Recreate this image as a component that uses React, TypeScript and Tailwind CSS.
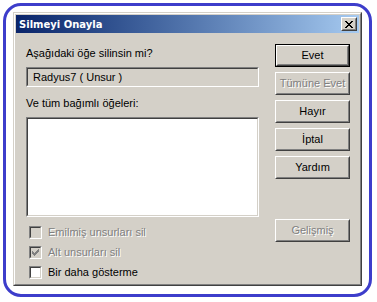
const face = "font-['Liberation_Sans',Arial,sans-serif]";

type BtnProps = {
  label: string;
  isDefault?: boolean;
  disabled?: boolean;
};

function ClassicButton({ label, isDefault, disabled }: BtnProps) {
  const body = (
    <div className="h-full w-full border border-t-white border-l-white border-r-[#404040] border-b-[#404040]">
      <div className="flex h-full w-full items-center justify-center border border-t-[#d4d0c8] border-l-[#d4d0c8] border-r-[#808080] border-b-[#808080]">
        <span
          className={
            disabled
              ? 'text-[11px] leading-[13px] text-[#808080] [text-shadow:1px_1px_0_#ffffff]'
              : 'text-[11px] leading-[13px] text-black'
          }
        >
          {label}
        </span>
      </div>
    </div>
  );

  if (isDefault) {
    return <div className="h-[23px] w-[75px] border border-black">{body}</div>;
  }
  return <div className="h-[23px] w-[75px]">{body}</div>;
}

type CheckProps = {
  label: string;
  checked?: boolean;
  disabled?: boolean;
};

function ClassicCheck({ label, checked, disabled }: CheckProps) {
  return (
    <div className="flex h-[13px] items-center">
      <div className="ml-[3px] h-[13px] w-[13px] border border-t-[#808080] border-l-[#808080] border-r-white border-b-white">
        <div
          className={
            disabled
              ? 'flex h-full w-full items-center justify-center border border-t-[#404040] border-l-[#404040] border-r-[#d4d0c8] border-b-[#d4d0c8] bg-[#d4d0c8]'
              : 'flex h-full w-full items-center justify-center border border-t-[#404040] border-l-[#404040] border-r-[#d4d0c8] border-b-[#d4d0c8] bg-white'
          }
        >
          {checked && (
            <svg width="7" height="7" viewBox="0 0 7 7" shapeRendering="crispEdges">
              <path
                d="M0 2h1v3h-1zM1 3h1v3h-1zM2 4h1v3h-1zM3 3h1v3h-1zM4 2h1v3h-1zM5 1h1v3h-1zM6 0h1v3h-1z"
                fill={disabled ? '#808080' : '#000000'}
              />
            </svg>
          )}
        </div>
      </div>
      <span
        className={
          disabled
            ? 'ml-[6px] text-[11px] leading-[13px] text-[#808080] [text-shadow:1px_1px_0_#ffffff]'
            : 'ml-[6px] text-[11px] leading-[13px] text-black'
        }
      >
        {label}
      </span>
    </div>
  );
}

export default function App() {
  return (
    <div className={`h-[302px] w-[377px] bg-white p-[3px] ${face}`}>
      <div className="h-[294px] w-[369px] rounded-[18px] border-[3px] border-[#3d3dcb] pl-[7px] pt-[6px]">
        {/* dialog window */}
        <div className="h-[274px] w-[349px] border border-t-[#d4d0c8] border-l-[#d4d0c8] border-r-[#404040] border-b-[#404040] bg-[#d4d0c8]">
          <div className="flex h-full w-full flex-col border border-t-white border-l-white border-r-[#808080] border-b-[#808080] p-[1px]">
            {/* title bar */}
            <div className="flex h-[18px] items-center justify-between bg-gradient-to-r from-[#0a246a] to-[#a6caf0] pl-[3px] pr-[2px]">
              <span className="font-['DejaVu_Sans',sans-serif] text-[10px] font-bold leading-[13px] text-white">
                Silmeyi Onayla
              </span>
              <div className="h-[14px] w-[16px] border border-t-white border-l-white border-r-[#404040] border-b-[#404040] bg-[#d4d0c8]">
                <div className="flex h-full w-full items-center justify-center border border-t-[#d4d0c8] border-l-[#d4d0c8] border-r-[#808080] border-b-[#808080]">
                  <svg width="8" height="7" viewBox="0 0 8 7" shapeRendering="crispEdges">
                    <path
                      d="M0 0h2v1h-2zM6 0h2v1h-2zM1 1h2v1h-2zM5 1h2v1h-2zM2 2h4v1h-4zM3 3h2v1h-2zM2 4h4v1h-4zM1 5h2v1h-2zM5 5h2v1h-2zM0 6h2v1h-2zM6 6h2v1h-2z"
                      fill="#000000"
                    />
                  </svg>
                </div>
              </div>
            </div>

            {/* body */}
            <div className="flex flex-1 pl-[10px]">
              <div className="flex w-[233px] flex-col pt-[13px]">
                <div className="h-[14px] text-[11px] leading-[14px] text-black">Aşağıdaki öğe silinsin mi?</div>
                <div className="mt-[7px] h-[20px] border border-t-[#808080] border-l-[#808080] border-r-white border-b-white">
                  <div className="flex h-full items-center border border-t-[#404040] border-l-[#404040] border-r-[#d4d0c8] border-b-[#d4d0c8] pl-[5px] text-[11px] leading-[13px] text-black">
                    Radyus7 ( Unsur )
                  </div>
                </div>
                <div className="mt-[9px] h-[14px] text-[11px] leading-[14px] text-black">Ve tüm bağımlı öğeleri:</div>
                <div className="mt-[7px] h-[100px] border border-t-[#808080] border-l-[#808080] border-r-white border-b-white">
                  <div className="h-full border border-t-[#404040] border-l-[#404040] border-r-[#d4d0c8] border-b-[#d4d0c8] bg-white" />
                </div>
                <div className="mt-[9px] flex flex-col gap-[7px]">
                  <ClassicCheck label="Emilmiş unsurları sil" disabled />
                  <ClassicCheck label="Alt unsurları sil" checked disabled />
                  <ClassicCheck label="Bir daha gösterme" />
                </div>
              </div>

              <div className="ml-[16px] flex flex-col pt-[11px]">
                <div className="flex flex-col gap-[5px]">
                  <ClassicButton label="Evet" isDefault />
                  <ClassicButton label="Tümüne Evet" disabled />
                  <ClassicButton label="Hayır" />
                  <ClassicButton label="İptal" />
                  <ClassicButton label="Yardım" />
                </div>
                <div className="mt-[40px]">
                  <ClassicButton label="Gelişmiş" disabled />
                </div>
              </div>
            </div>
          </div>
        </div>
      </div>
    </div>
  );
}
